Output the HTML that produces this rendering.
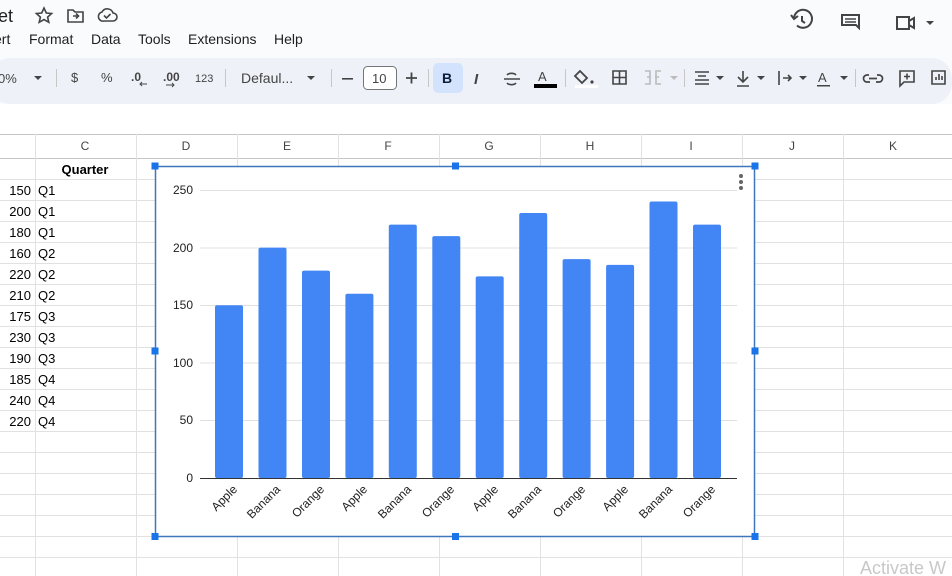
<!DOCTYPE html>
<html><head><meta charset="utf-8"><style>
html,body{margin:0;padding:0;width:952px;height:576px;overflow:hidden;background:#fff;font-family:"Liberation Sans",Arial,sans-serif}
svg{display:block}
</style></head><body>
<svg width="952" height="576" viewBox="0 0 952 576" xmlns="http://www.w3.org/2000/svg" font-family="Liberation Sans, Arial, sans-serif">
<rect x="0" y="0" width="952" height="134" fill="#f9fbfd"/>
<rect x="-10" y="58" width="962" height="46" rx="20" fill="#eef2f8"/>
<rect x="0" y="104" width="952" height="30" fill="#fff"/>
<text x="-2" y="22" font-size="18" fill="#1f1f1f">et</text>
<g fill="none" stroke="#444" stroke-width="1.6">
<path d="M44 8 l2.3 5 5.3.5-4 3.6 1.2 5.2-4.8-2.8-4.8 2.8 1.2-5.2-4-3.6 5.3-.5z"/>
<path d="M68 10h5l2 2h8v10h-15z"/><path d="M73 16h6M76 13.5l2.5 2.5-2.5 2.5"/>
<path d="M104 21h9a4 4 0 0 0 0-8 6 6 0 0 0-11-1 4.5 4.5 0 0 0 2 9z"/><path d="M104 15.5l2.5 2.5 4-4"/>
</g>
<text x="-6" y="44" font-size="14" fill="#1f1f1f">ert</text>
<text x="29" y="44" font-size="14" fill="#1f1f1f">Format</text>
<text x="91" y="44" font-size="14" fill="#1f1f1f">Data</text>
<text x="138" y="44" font-size="14" fill="#1f1f1f">Tools</text>
<text x="188" y="44" font-size="14" fill="#1f1f1f">Extensions</text>
<text x="274" y="44" font-size="14" fill="#1f1f1f">Help</text>
<g fill="none" stroke="#444" stroke-width="2">
<path d="M794 19a9 9 0 1 1 3 6.5"/><path d="M791 15l3 4 4-3"/><path d="M802 16v5l3 2"/>
<path d="M842 15h17v13l-3-3h-14z"/><path d="M845 19h11M845 22h11" stroke-width="1.5"/>
<path d="M897 17h12v12h-12z" /><path d="M909 21l5-3v10l-5-3"/>
</g>
<path d="M926 21l4 4 4-4z" fill="#444"/>
<g font-size="13" fill="#444">
<text x="-2" y="83">0%</text><path d="M34 76l4 4 4-4z" fill="#444"/>
<rect x="56" y="69" width="1" height="18" fill="#c7c7c7"/>
<text x="71" y="82" font-size="13">$</text>
<text x="101" y="82" font-size="13">%</text>
<text x="131" y="81" font-size="12" font-weight="bold">.0</text><path d="M140 84h7M142 82l-2 2 2 2" stroke="#444" fill="none"/>
<text x="163" y="81" font-size="12" font-weight="bold">.00</text><path d="M166 85h8M172 83l2 2-2 2" stroke="#444" fill="none"/>
<text x="195" y="82" font-size="11">123</text>
<rect x="225" y="69" width="1" height="18" fill="#c7c7c7"/>
<text x="241" y="83" font-size="14">Defaul...</text><path d="M307 76l4 4 4-4z" fill="#444"/>
<rect x="331" y="69" width="1" height="18" fill="#c7c7c7"/>
<rect x="342" y="78" width="11" height="1.6" fill="#444"/>
<rect x="363.5" y="66.5" width="33" height="23" rx="4" fill="#fff" stroke="#747775"/>
<text x="372" y="83" font-size="13">10</text>
<path d="M406 78h11M411.5 72.5v11" stroke="#444" stroke-width="1.8"/>
<rect x="428" y="69" width="1" height="18" fill="#c7c7c7"/>
<rect x="433" y="63" width="30" height="30" rx="5" fill="#d3e3fd"/>
<text x="442" y="83" font-size="14" font-weight="bold" fill="#0b1d3a">B</text>
<text x="474" y="84" font-size="15" font-style="italic" font-weight="bold" fill="#444">I</text>
<path d="M504 79h16M507 75a5 3 0 0 1 9 0M507 83a5 3 0 0 0 9 0" stroke="#444" stroke-width="1.6" fill="none"/>
<text x="538" y="81" font-size="13">A</text><rect x="534" y="84" width="23" height="4" fill="#000"/>
<rect x="565" y="69" width="1" height="18" fill="#c7c7c7"/>
<path d="M580 71l7 7-5 5-7-7z" fill="none" stroke="#444" stroke-width="1.8"/><circle cx="592" cy="82" r="1.6" fill="#444"/>
<rect x="575" y="85" width="23" height="3" fill="#fff"/>
<path d="M613 71h13v13h-13zM619.5 71v13M613 77.5h13" fill="none" stroke="#444" stroke-width="1.6"/>
<path d="M645 71h5v13h-5M661 71h-5v13h5M647 77h4M659 77h-4" fill="none" stroke="#bbb" stroke-width="1.6"/><path d="M670 76l4 4 4-4z" fill="#bbb"/>
<rect x="684" y="69" width="1" height="18" fill="#c7c7c7"/>
<path d="M695 72h14M698 76h8M695 80h14M695 84h14" stroke="#444" stroke-width="1.6"/><path d="M716 76l4 4 4-4z" fill="#444"/>
<path d="M743 71v11M738 77l5 5 5-5M737 86h12" stroke="#444" stroke-width="1.6" fill="none"/><path d="M757 76l4 4 4-4z" fill="#444"/>
<path d="M779 71v14M783 78h8M788 75l3 3-3 3" stroke="#444" stroke-width="1.6" fill="none"/><path d="M799 76l4 4 4-4z" fill="#444"/>
<text x="818" y="82" font-size="13">A</text><rect x="817" y="85" width="13" height="1.5" fill="#444"/><path d="M840 76l4 4 4-4z" fill="#444"/>
<rect x="855" y="69" width="1" height="18" fill="#c7c7c7"/>
<path d="M869 75h-2a3.5 3.5 0 0 0 0 7h3M877 75h2a3.5 3.5 0 0 1 0 7h-3M869 78.5h8" stroke="#444" stroke-width="1.7" fill="none"/>
<path d="M900 71h14v11h-10l-4 4z M907 73.5v6M904 76.5h6" stroke="#444" stroke-width="1.6" fill="none"/>
<path d="M932 71h13v13h-13zM936 80v-3M939 80v-6M942 80v-4" stroke="#444" stroke-width="1.6" fill="none"/>
</g>
<rect x="0" y="134" width="952" height="24" fill="#fff"/>
<g stroke="#e1e1e1" stroke-width="1">
<line x1="0" y1="134.5" x2="952" y2="134.5" stroke="#c4c7c5"/>
<line x1="0" y1="158.5" x2="952" y2="158.5" stroke="#c4c7c5"/>
<path d="M0 179.5H952M0 200.5H952M0 221.5H952M0 242.5H952M0 263.5H952M0 284.5H952M0 305.5H952M0 326.5H952M0 347.5H952M0 368.5H952M0 389.5H952M0 410.5H952M0 431.5H952M0 452.5H952M0 473.5H952M0 494.5H952M0 515.5H952M0 536.5H952M0 557.5H952"/>
<path d="M35.5 134V576M136.5 134V576M237.5 134V576M338.5 134V576M439.5 134V576M540.5 134V576M641.5 134V576M742.5 134V576M843.5 134V576"/>
</g>
<g font-size="12" fill="#444" text-anchor="middle">
<text x="85" y="150">C</text><text x="186" y="150">D</text><text x="287" y="150">E</text><text x="388" y="150">F</text><text x="489" y="150">G</text><text x="590" y="150">H</text><text x="691" y="150">I</text><text x="792" y="150">J</text><text x="893" y="150">K</text>
</g>
<text x="85" y="174" font-size="13" font-weight="bold" text-anchor="middle" fill="#000">Quarter</text>
<g font-size="13" fill="#000">
<g text-anchor="end">
<text x="31" y="195">150</text><text x="31" y="216">200</text><text x="31" y="237">180</text><text x="31" y="258">160</text><text x="31" y="279">220</text><text x="31" y="300">210</text><text x="31" y="321">175</text><text x="31" y="342">230</text><text x="31" y="363">190</text><text x="31" y="384">185</text><text x="31" y="405">240</text><text x="31" y="426">220</text>
</g>
<text x="38" y="195">Q1</text><text x="38" y="216">Q1</text><text x="38" y="237">Q1</text><text x="38" y="258">Q2</text><text x="38" y="279">Q2</text><text x="38" y="300">Q2</text><text x="38" y="321">Q3</text><text x="38" y="342">Q3</text><text x="38" y="363">Q3</text><text x="38" y="384">Q4</text><text x="38" y="405">Q4</text><text x="38" y="426">Q4</text>
</g>
<rect x="155.5" y="166.5" width="599" height="370" fill="#fff" stroke="#3f77bd" stroke-width="1.5"/>
<g stroke="#e0e0e0"><path d="M200 190.5H737M200 248H737M200 305.5H737M200 363H737M200 420.5H737"/></g>
<g font-size="12" fill="#222" text-anchor="end">
<text x="193" y="194">250</text><text x="193" y="252">200</text><text x="193" y="309">150</text><text x="193" y="367">100</text><text x="193" y="424">50</text><text x="193" y="482">0</text>
</g>
<g fill="#4285f4">
<rect x="215" y="305.2" width="28" height="172.8" rx="2"/>
<rect x="258.5" y="247.6" width="28" height="230.4" rx="2"/>
<rect x="302" y="270.6" width="28" height="207.4" rx="2"/>
<rect x="345.4" y="293.7" width="28" height="184.3" rx="2"/>
<rect x="388.8" y="224.6" width="28" height="253.4" rx="2"/>
<rect x="432.3" y="236.1" width="28" height="241.9" rx="2"/>
<rect x="475.7" y="276.4" width="28" height="201.6" rx="2"/>
<rect x="519.2" y="213" width="28" height="265" rx="2"/>
<rect x="562.6" y="259.1" width="28" height="218.9" rx="2"/>
<rect x="606.1" y="264.9" width="28" height="213.1" rx="2"/>
<rect x="649.5" y="201.5" width="28" height="276.5" rx="2"/>
<rect x="693" y="224.6" width="28" height="253.4" rx="2"/>
</g>
<line x1="200" y1="478.5" x2="737" y2="478.5" stroke="#333"/>
<g font-size="12" fill="#222" text-anchor="end">
<text transform="translate(238,490) rotate(-45)">Apple</text>
<text transform="translate(281,490) rotate(-45)">Banana</text>
<text transform="translate(325,490) rotate(-45)">Orange</text>
<text transform="translate(368,490) rotate(-45)">Apple</text>
<text transform="translate(412,490) rotate(-45)">Banana</text>
<text transform="translate(455,490) rotate(-45)">Orange</text>
<text transform="translate(499,490) rotate(-45)">Apple</text>
<text transform="translate(542,490) rotate(-45)">Banana</text>
<text transform="translate(586,490) rotate(-45)">Orange</text>
<text transform="translate(629,490) rotate(-45)">Apple</text>
<text transform="translate(673,490) rotate(-45)">Banana</text>
<text transform="translate(716,490) rotate(-45)">Orange</text>
</g>
<g fill="#666"><circle cx="741" cy="176" r="2"/><circle cx="741" cy="182" r="2"/><circle cx="741" cy="188" r="2"/></g>
<g fill="#1a73e8">
<rect x="151.5" y="162.5" width="7" height="7"/><rect x="452" y="162.5" width="7" height="7"/><rect x="751.5" y="162.5" width="7" height="7"/>
<rect x="151.5" y="347.5" width="7" height="7"/><rect x="751.5" y="347.5" width="7" height="7"/>
<rect x="151.5" y="533" width="7" height="7"/><rect x="452" y="533" width="7" height="7"/><rect x="751.5" y="533" width="7" height="7"/>
</g>
<text x="860" y="574" font-size="18" fill="#c8c8c8">Activate W</text>
</svg>
</body></html>
